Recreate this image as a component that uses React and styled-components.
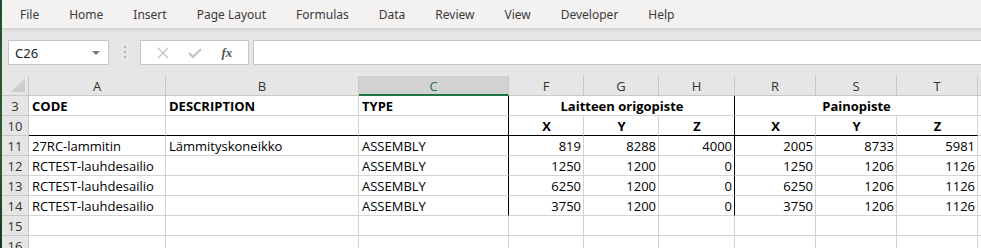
import React from "react";
import styled, { createGlobalStyle, css } from "styled-components";

const GlobalStyle = createGlobalStyle`
  html, body {
    margin: 0;
    padding: 0;
    background: #fff;
    overflow: hidden;
  }
  #root {
    width: 981px;
    height: 248px;
  }
`;

const COLS = [
  { id: "A", w: 137 },
  { id: "B", w: 193 },
  { id: "C", w: 150, selected: true },
  { id: "F", w: 75 },
  { id: "G", w: 75 },
  { id: "H", w: 76 },
  { id: "R", w: 81 },
  { id: "S", w: 81 },
  { id: "T", w: 81 },
  { id: "", w: 20 },
];

const ROWS = [
  ["27RC-lammitin", "Lämmityskoneikko", "ASSEMBLY", 819, 8288, 4000, 2005, 8733, 5981],
  ["RCTEST-lauhdesailio", "", "ASSEMBLY", 1250, 1200, 0, 1250, 1206, 1126],
  ["RCTEST-lauhdesailio", "", "ASSEMBLY", 6250, 1200, 0, 6250, 1206, 1126],
  ["RCTEST-lauhdesailio", "", "ASSEMBLY", 3750, 1200, 0, 3750, 1206, 1126],
];

const TABS = ["File", "Home", "Insert", "Page Layout", "Formulas", "Data", "Review", "View", "Developer", "Help"];

const Window = styled.div`
  display: flex;
  width: 981px;
  height: 248px;
  overflow: hidden;
`;

const Edge = styled.div`
  width: 2px;
  flex: none;
  background: linear-gradient(#1d4f2e, #2c5f35 60%, #16391f);
`;

const Main = styled.div`
  flex: 1;
  display: flex;
  flex-direction: column;
  min-width: 0;
  background: #e6e6e6;
  overflow: hidden;
`;

const TabBar = styled.div`
  flex: none;
  height: 28px;
  background: #f3f2f1;
  display: flex;
  align-items: center;
  padding-left: 18px;
  gap: 30px;
  font-family: "Noto Sans", "Open Sans", sans-serif;
  font-size: 12px;
  color: #3b3a39;
`;

const Tab = styled.div`
  white-space: nowrap;
`;

const Shadow = styled.div`
  flex: none;
  height: 5px;
  background: linear-gradient(#d4d4d4, #e6e6e6);
`;

const FormulaBar = styled.div`
  flex: none;
  height: 43px;
  display: flex;
  align-items: flex-start;
  padding-top: 7px;
  box-sizing: border-box;
  padding-left: 6px;
`;

const boxCss = css`
  height: 25px;
  box-sizing: border-box;
  background: #fff;
  border: 1px solid #c6c6c6;
`;

const NameBox = styled.div`
  ${boxCss}
  width: 101px;
  display: flex;
  align-items: center;
  justify-content: space-between;
  padding: 0 8px 0 6px;
  font-family: "Noto Sans", "Open Sans", sans-serif;
  font-size: 13px;
  color: #222;
`;

const Caret = styled.span`
  width: 0;
  height: 0;
  border-left: 4px solid transparent;
  border-right: 4px solid transparent;
  border-top: 4px solid #777;
`;

const Dots = styled.div`
  width: 31px;
  display: flex;
  flex-direction: column;
  align-items: center;
  gap: 3px;
  padding-top: 6px;
  span {
    width: 2px;
    height: 2px;
    background: #b0b0b0;
  }
`;

const FxBox = styled.div`
  ${boxCss}
  width: 109px;
  display: flex;
  align-items: center;
  justify-content: space-around;
  padding: 0 6px;
`;

const FxLabel = styled.span`
  font-family: "Liberation Serif", serif;
  font-style: italic;
  font-weight: bold;
  font-size: 13px;
  color: #555;
`;

const FormulaInput = styled.div`
  ${boxCss}
  flex: 1;
  margin-left: 4px;
  border-right: none;
`;

const Sheet = styled.div`
  flex: none;
  display: grid;
  grid-template-columns: 27px ${COLS.map((c) => c.w + "px").join(" ")};
  grid-auto-rows: 20px;
  background: #fff;
  font-family: "Open Sans", "Noto Sans", sans-serif;
  font-size: 13px;
  color: #000;
`;

const Corner = styled.div`
  background: #e6e6e6;
  border-right: 1px solid #c8c8c8;
  border-bottom: 1px solid #c8c8c8;
  position: relative;
  &::after {
    content: "";
    position: absolute;
    right: 3px;
    bottom: 3px;
    border-left: 14px solid transparent;
    border-bottom: 14px solid #cdcdcd;
  }
`;

const ColHead = styled.div`
  background: ${(p) => (p.$sel ? "#d2d2d2" : "#e6e6e6")};
  border-right: 1px solid #c8c8c8;
  border-bottom: ${(p) => (p.$sel ? "2px solid #217346" : "1px solid #c8c8c8")};
  color: ${(p) => (p.$sel ? "#217346" : "#333")};
  display: flex;
  align-items: center;
  justify-content: center;
  font-size: 13px;
  padding-top: 1px;
`;

const RowHead = styled.div`
  background: #e6e6e6;
  border-right: 1px solid #c8c8c8;
  border-bottom: 1px solid #c8c8c8;
  display: flex;
  align-items: center;
  justify-content: center;
  color: #333;
  font-size: 13px;
`;

const Cell = styled.div`
  border-right: 1px solid ${(p) => (p.$thickR ? "#000" : "#d4d4d4")};
  border-bottom: 1px solid ${(p) => (p.$thickB ? "#000" : "#d4d4d4")};
  display: flex;
  align-items: center;
  justify-content: ${(p) => (p.$align === "right" ? "flex-end" : p.$align === "center" ? "center" : "flex-start")};
  padding: 0 2px 0 3px;
  font-weight: ${(p) => (p.$bold ? 700 : 400)};
  white-space: nowrap;
  overflow: hidden;
  grid-column: ${(p) => (p.$span ? `span ${p.$span}` : "auto")};
`;

// thick vertical lines sit on the right edge of C and H (cols idx 2 and 5)
const thickRight = (i, row) => row <= 14 && (i === 2 || i === 5);

const renderRow = (num, cells) => (
  <React.Fragment key={num}>
    <RowHead>{num}</RowHead>
    {cells}
  </React.Fragment>
);

const App = () => {
  const header = renderRow(3, [
    <Cell key="a" $bold>CODE</Cell>,
    <Cell key="b" $bold>DESCRIPTION</Cell>,
    <Cell key="c" $bold $thickR>TYPE</Cell>,
    <Cell key="f" $bold $span={3} $align="center" $thickR>Laitteen origopiste</Cell>,
    <Cell key="r" $bold $span={3} $align="center">Painopiste</Cell>,
    <Cell key="x" />,
  ]);

  const sub = renderRow(
    10,
    ["", "", "", "X", "Y", "Z", "X", "Y", "Z", ""].map((t, i) => (
      <Cell key={i} $bold $align="center" $thickR={thickRight(i, 10)} $thickB={i < 9}>
        {t}
      </Cell>
    ))
  );

  const data = ROWS.map((r, ri) =>
    renderRow(
      11 + ri,
      [...r, ""].map((v, i) => (
        <Cell key={i} $align={i >= 3 ? "right" : "left"} $thickR={thickRight(i, 11 + ri)}>
          {v}
        </Cell>
      ))
    )
  );

  const empty = [15, 16].map((n) =>
    renderRow(n, COLS.map((c, i) => <Cell key={i} />))
  );

  return (
    <>
      <GlobalStyle />
      <Window>
        <Edge />
        <Main>
          <TabBar>
            {TABS.map((t) => (
              <Tab key={t}>{t}</Tab>
            ))}
          </TabBar>
          <Shadow />
          <FormulaBar>
            <NameBox>
              C26
              <Caret />
            </NameBox>
            <Dots>
              <span />
              <span />
              <span />
            </Dots>
            <FxBox>
              <svg width="12" height="12" viewBox="0 0 12 12">
                <path d="M1 1 L11 11 M11 1 L1 11" stroke="#c2c2c2" strokeWidth="1.3" fill="none" />
              </svg>
              <svg width="14" height="12" viewBox="0 0 14 12">
                <path d="M1 6 L5 10 L13 2" stroke="#c2c2c2" strokeWidth="2" fill="none" />
              </svg>
              <FxLabel>fx</FxLabel>
            </FxBox>
            <FormulaInput />
          </FormulaBar>
          <Sheet>
            <Corner />
            {COLS.map((c, i) => (
              <ColHead key={i} $sel={c.selected}>
                {c.id}
              </ColHead>
            ))}
            {header}
            {sub}
            {data}
            {empty}
          </Sheet>
        </Main>
      </Window>
    </>
  );
};

export default App;
